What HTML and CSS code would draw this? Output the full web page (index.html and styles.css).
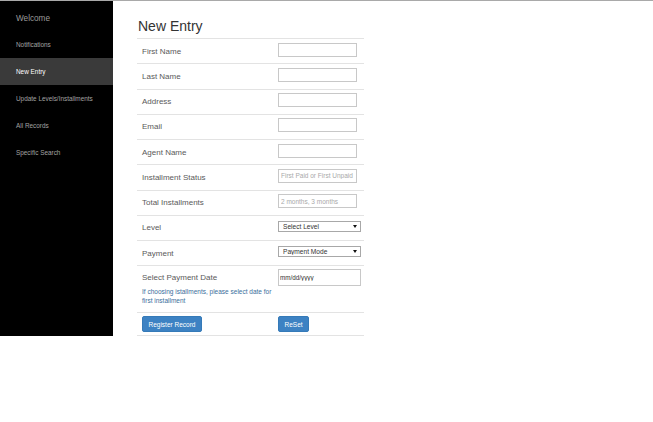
FILE: index.html
```
<!DOCTYPE html>
<html lang="en">
<head>
    <meta charset="UTF-8">
    <title>New Entry</title>
    <link rel="stylesheet" href="styles.css">
</head>
<body>
<div class="wrap">
    <div class="sidebar">
        <div class="welcome">Welcome</div>
        <ul class="nav">
            <li>Notifications</li>
            <li class="active">New Entry</li>
            <li>Update Levels/Installments</li>
            <li>All Records</li>
            <li>Specific Search</li>
        </ul>
    </div>
    <div class="main">
        <h1 class="title">New Entry</h1>
        <div class="form">
            <div class="row">
                <div class="label">First Name</div>
                <div class="field"><input type="text" class="box"></div>
            </div>
            <div class="row">
                <div class="label">Last Name</div>
                <div class="field"><input type="text" class="box"></div>
            </div>
            <div class="row">
                <div class="label">Address</div>
                <div class="field"><input type="text" class="box"></div>
            </div>
            <div class="row">
                <div class="label">Email</div>
                <div class="field"><input type="text" class="box"></div>
            </div>
            <div class="row">
                <div class="label">Agent Name</div>
                <div class="field"><input type="text" class="box"></div>
            </div>
            <div class="row">
                <div class="label">Installment Status</div>
                <div class="field"><input type="text" class="box" placeholder="First Paid or First Unpaid"></div>
            </div>
            <div class="row">
                <div class="label">Total Installments</div>
                <div class="field"><input type="text" class="box" placeholder="2 months, 3 months"></div>
            </div>
            <div class="row">
                <div class="label">Level</div>
                <div class="field">
                    <div class="select-wrap">
                        <select class="select"><option>Select Level</option></select>
                    </div>
                </div>
            </div>
            <div class="row">
                <div class="label">Payment</div>
                <div class="field">
                    <div class="select-wrap">
                        <select class="select"><option>Payment Mode</option></select>
                    </div>
                </div>
            </div>
            <div class="row row-date">
                <div class="label">
                    <div class="date-label">Select Payment Date</div>
                    <p class="help">If choosing istallments, please select date for first installment</p>
                </div>
                <div class="field"><input type="text" class="date" placeholder="mm/dd/yyyy"></div>
            </div>
            <div class="row row-buttons">
                <div class="label"><button class="btn">Register Record</button></div>
                <div class="field"><button class="btn">ReSet</button></div>
            </div>
        </div>
    </div>
</div>
</body>
</html>
```

FILE: styles.css
```
* {
    margin: 0;
    padding: 0;
    box-sizing: border-box;
}
body {
    font-family: "Liberation Sans", Arial, sans-serif;
    background: #fff;
    border-top: 1px solid #a9a9a9;
}
.wrap {
    display: flex;
}
.sidebar {
    width: 113px;
    background-color: #000;
}
.welcome {
    padding: 13px 16px 7px;
    font-size: 8.2px;
    line-height: 10px;
    color: #9a9a9a;
}
.nav {
    list-style: none;
}
.nav li {
    height: 27px;
    line-height: 27px;
    padding-left: 16px;
    font-size: 6.4px;
    color: #a3a3a3;
    white-space: nowrap;
}
.nav .active {
    background-color: #3a3a3a;
    color: #fff;
}
.main {
    flex: 1;
    padding-left: 25px;
}
.title {
    padding-top: 17px;
    margin-bottom: 4px;
    font-size: 14px;
    line-height: 16px;
    font-weight: normal;
    color: #333;
}
.form {
    width: 227px;
    margin-left: -1px;
}
.row {
    display: flex;
    align-items: center;
    height: 25.25px;
    border-top: 1px solid #e3e3e3;
}
.label {
    width: 137px;
    padding-left: 5px;
    font-size: 8px;
    color: #5a5a5a;
}
.field {
    padding-left: 4px;
}
.box {
    display: block;
    width: 79px;
    height: 14px;
    margin-bottom: 3px;
    padding: 0 2px;
    border: 1px solid #c8c8c8;
    font-family: inherit;
    font-size: 6.5px;
    color: #555;
    outline: none;
}
.box::placeholder {
    color: #a9a9a9;
}
.select-wrap {
    position: relative;
    margin-bottom: 3px;
}
.select-wrap::after {
    content: "";
    position: absolute;
    right: 4px;
    top: 4px;
    border-left: 2px solid transparent;
    border-right: 2px solid transparent;
    border-top: 3px solid #111;
}
.select {
    display: block;
    width: 83px;
    height: 11px;
    padding: 0 4px;
    border: 1px solid #a8a8a8;
    border-radius: 0;
    background: #fff;
    font-family: inherit;
    font-size: 6.6px;
    color: #333;
    -webkit-appearance: none;
    appearance: none;
    outline: none;
}
.row-date {
    height: 47px;
    align-items: flex-start;
}
.row-date .label {
    padding-top: 6px;
}
.date-label {
    line-height: 12px;
}
.help {
    margin-top: 2.5px;
    font-size: 6.5px;
    line-height: 9px;
    color: #3b6e9b;
}
.date {
    display: block;
    width: 83px;
    height: 17px;
    margin-top: 3px;
    padding: 0 1px;
    border: 1px solid #c8c8c8;
    font-family: inherit;
    font-size: 6.3px;
    color: #333;
    outline: none;
}
.date::placeholder {
    color: #333;
}
.row-buttons {
    height: 24px;
    border-bottom: 1px solid #e3e3e3;
}
.btn {
    display: block;
    height: 16px;
    padding: 0 5.5px;
    border: 1px solid #357ab8;
    border-radius: 2px;
    background-color: #3d82c3;
    color: #fff;
    font-family: inherit;
    font-size: 6.5px;
    cursor: pointer;
}
```
